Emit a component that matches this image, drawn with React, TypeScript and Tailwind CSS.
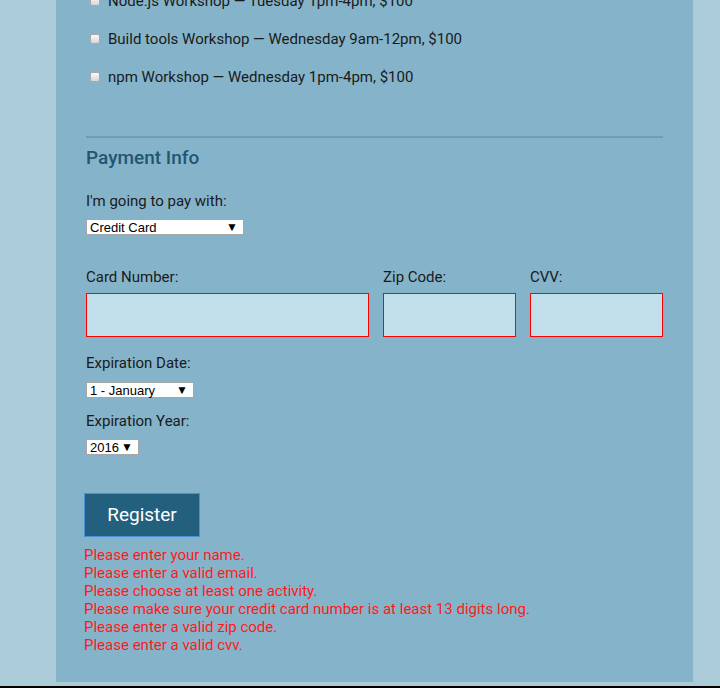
import { useState } from "react";

function Workshop({ label }: { label: string }) {
  return (
    <label className="h-[38px] flex items-center">
      <span className="ml-[4px] w-[10px] h-[10px] rounded-[2px] border border-[#a9a9a9] bg-gradient-to-b from-[#fafafa] to-[#d6d6d6]" />
      <span className="ml-[8px] text-[15px] text-[#1a1a1a]">{label}</span>
    </label>
  );
}

function FakeSelect({ value, width }: { value: string; width: string }) {
  return (
    <div
      className={`relative h-[16px] ${width} bg-white border border-[#a6a6a6] flex items-center pl-[3px] text-[13px] leading-none text-black`}
      style={{ fontFamily: '"Liberation Sans", Arial, sans-serif' }}
    >
      {value}
      <span className="absolute right-[5px] top-[1px] text-[12px] leading-none">▼</span>
    </div>
  );
}

export default function App() {
  const [errors] = useState([
    "Please enter your name.",
    "Please enter a valid email.",
    "Please choose at least one activity.",
    "Please make sure your credit card number is at least 13 digits long.",
    "Please enter a valid zip code.",
    "Please enter a valid cvv.",
  ]);

  return (
    <div
      className="h-[688px] bg-[#abcbd8] flex flex-col overflow-hidden"
      style={{ fontFamily: "Roboto, 'Noto Sans', sans-serif" }}
    >
      <div className="ml-[56px] w-[637px] h-[682px] bg-[#85b4ca] px-[30px] overflow-hidden">
        {/* Activities */}
        <div className="-mt-[18px]">
          <Workshop label="Node.js Workshop — Tuesday 1pm-4pm, $100" />
          <Workshop label="Build tools Workshop — Wednesday 9am-12pm, $100" />
          <Workshop label="npm Workshop — Wednesday 1pm-4pm, $100" />
        </div>

        <div className="mt-[40px] border-t-2 border-[#6a9fb8]" />

        {/* Payment Info */}
        <h2 className="mt-[8px] text-[19px] leading-[24px] font-medium text-[#215673]">Payment Info</h2>

        <p className="mt-[21px] text-[15px] leading-[20px] text-[#1a1a1a]">I'm going to pay with:</p>
        <div className="mt-[8px]">
          <FakeSelect value="Credit Card" width="w-[158px]" />
        </div>

        <div className="mt-[32px] flex gap-[14px]">
          <div className="w-[283px]">
            <p className="text-[15px] leading-[20px] text-[#1a1a1a]">Card Number:</p>
            <input className="mt-[6px] w-full h-[44px] bg-[#c1dfea] border border-[#ff0000] outline-none" />
          </div>
          <div className="w-[133px]">
            <p className="text-[15px] leading-[20px] text-[#1a1a1a]">Zip Code:</p>
            <input className="mt-[6px] w-full h-[44px] bg-[#c1dfea] border border-[#ff0000] outline-none" />
          </div>
          <div className="w-[133px]">
            <p className="text-[15px] leading-[20px] text-[#1a1a1a]">CVV:</p>
            <input className="mt-[6px] w-full h-[44px] bg-[#c1dfea] border border-[#ff0000] outline-none" />
          </div>
        </div>

        <p className="mt-[16px] text-[15px] leading-[20px] text-[#1a1a1a]">Expiration Date:</p>
        <div className="mt-[9px]">
          <FakeSelect value="1 - January" width="w-[108px]" />
        </div>

        <p className="mt-[13px] text-[15px] leading-[20px] text-[#1a1a1a]">Expiration Year:</p>
        <div className="mt-[8px]">
          <FakeSelect value="2016" width="w-[53px]" />
        </div>

        <button className="mt-[38px] -ml-[2px] w-[116px] h-[44px] bg-[#22607e] border border-[#4d8fd6] text-white text-[19px]">
          Register
        </button>

        {/* Errors */}
        <div className="mt-[9px] -ml-[2px]">
          {errors.map((error, index) => (
            <p key={index} className="text-[15px] leading-[18px] text-[#ff1a1a]">
              {error}
            </p>
          ))}
        </div>
      </div>
      <div className="h-[4px]" />
      <div className="h-[2px] bg-black" />
    </div>
  );
}
